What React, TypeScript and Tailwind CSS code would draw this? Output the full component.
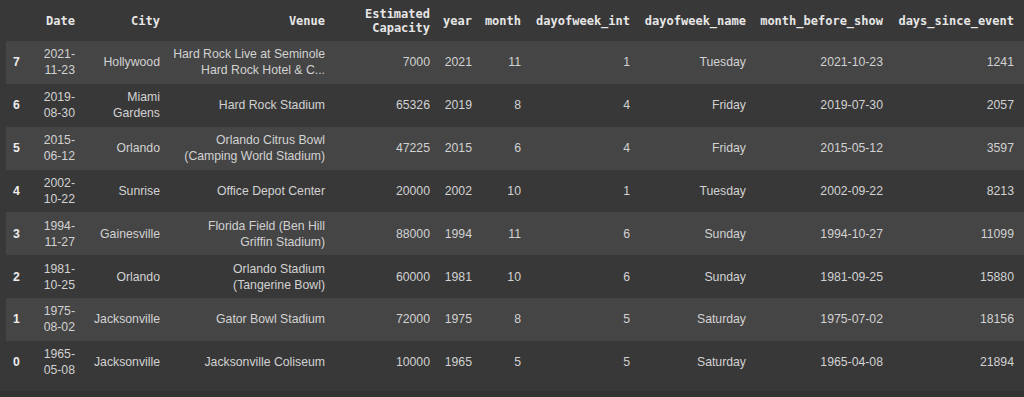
const cols = "grid grid-cols-[32px_43px_85px_165px_105px_42px_49px_109px_116px_137px_131px]";

type Row = {
  idx: string;
  date: [string, string];
  city: string[];
  venue: string[];
  cap: string;
  year: string;
  month: string;
  dowInt: string;
  dowName: string;
  before: string;
  since: string;
};

const rows: Row[] = [
  { idx: "7", date: ["2021-", "11-23"], city: ["Hollywood"], venue: ["Hard Rock Live at Seminole", "Hard Rock Hotel & C..."], cap: "7000", year: "2021", month: "11", dowInt: "1", dowName: "Tuesday", before: "2021-10-23", since: "1241" },
  { idx: "6", date: ["2019-", "08-30"], city: ["Miami", "Gardens"], venue: ["Hard Rock Stadium"], cap: "65326", year: "2019", month: "8", dowInt: "4", dowName: "Friday", before: "2019-07-30", since: "2057" },
  { idx: "5", date: ["2015-", "06-12"], city: ["Orlando"], venue: ["Orlando Citrus Bowl", "(Camping World Stadium)"], cap: "47225", year: "2015", month: "6", dowInt: "4", dowName: "Friday", before: "2015-05-12", since: "3597" },
  { idx: "4", date: ["2002-", "10-22"], city: ["Sunrise"], venue: ["Office Depot Center"], cap: "20000", year: "2002", month: "10", dowInt: "1", dowName: "Tuesday", before: "2002-09-22", since: "8213" },
  { idx: "3", date: ["1994-", "11-27"], city: ["Gainesville"], venue: ["Florida Field (Ben Hill", "Griffin Stadium)"], cap: "88000", year: "1994", month: "11", dowInt: "6", dowName: "Sunday", before: "1994-10-27", since: "11099" },
  { idx: "2", date: ["1981-", "10-25"], city: ["Orlando"], venue: ["Orlando Stadium", "(Tangerine Bowl)"], cap: "60000", year: "1981", month: "10", dowInt: "6", dowName: "Sunday", before: "1981-09-25", since: "15880" },
  { idx: "1", date: ["1975-", "08-02"], city: ["Jacksonville"], venue: ["Gator Bowl Stadium"], cap: "72000", year: "1975", month: "8", dowInt: "5", dowName: "Saturday", before: "1975-07-02", since: "18156" },
  { idx: "0", date: ["1965-", "05-08"], city: ["Jacksonville"], venue: ["Jacksonville Coliseum"], cap: "10000", year: "1965", month: "5", dowInt: "5", dowName: "Saturday", before: "1965-04-08", since: "21894" },
];

const headers: string[][] = [
  ["Date"],
  ["City"],
  ["Venue"],
  ["Estimated", "Capacity"],
  ["year"],
  ["month"],
  ["dayofweek_int"],
  ["dayofweek_name"],
  ["month_before_show"],
  ["days_since_event"],
];

const Lines = ({ lines }: { lines: string[] }) => (
  <div className="flex flex-col items-end justify-center px-[6px] text-right">
    {lines.map((l) => (
      <span key={l} className="whitespace-nowrap">
        {l}
      </span>
    ))}
  </div>
);

export default function App() {
  return (
    <main className="flex h-[397px] w-[1024px] flex-col overflow-hidden bg-[#383838]">
      <div className="pl-[6px]">
        <div
          className={`${cols} h-[41px] items-center font-['DejaVu_Sans_Mono',monospace] text-[12px] font-bold leading-[14px] text-[#e6e6e6]`}
        >
          <div />
          {headers.map((h) => (
            <Lines key={h.join()} lines={h} />
          ))}
        </div>

        <div className="font-['Liberation_Sans',Arial,sans-serif] text-[12.25px] leading-[16px] text-[#d2d2d2]">
          {rows.map((r, i) => (
            <div
              key={r.idx}
              className={`${cols} h-[42.85px] items-center ${i % 2 === 0 ? "bg-[#454545]" : "bg-[#383838]"}`}
            >
              <div className="pl-[7px] font-bold text-[#ececec]">{r.idx}</div>
              <Lines lines={r.date} />
              <Lines lines={r.city} />
              <Lines lines={r.venue} />
              <Lines lines={[r.cap]} />
              <Lines lines={[r.year]} />
              <Lines lines={[r.month]} />
              <Lines lines={[r.dowInt]} />
              <Lines lines={[r.dowName]} />
              <Lines lines={[r.before]} />
              <Lines lines={[r.since]} />
            </div>
          ))}
        </div>
      </div>
      <div className="mt-auto h-[6px] bg-[#333333]" />
    </main>
  );
}
